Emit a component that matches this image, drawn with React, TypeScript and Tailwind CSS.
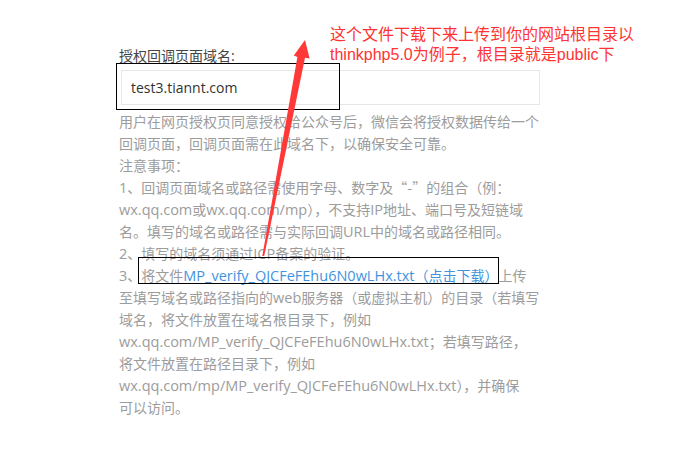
import React from "react";

const font = {
  fontFamily: '"Open Sans", "Noto Sans CJK SC", sans-serif',
};
const red = {
  fontFamily: '"Liberation Sans", "Noto Sans CJK SC", sans-serif',
};
const cjk = {
  fontFamily: '"Noto Sans CJK SC", sans-serif',
};

function rich(s: string): React.ReactNode[] {
  const parts = s.split(/([A-Za-z0-9_./]+)/);
  return parts.map((p, i) =>
    i % 2 === 1 ? (
      <span key={i} className="text-[14.5px]">
        {p}
      </span>
    ) : (
      <span key={i} style={cjk}>
        {p}
      </span>
    )
  );
}

const lines: React.ReactNode[] = [
  rich("用户在网页授权页同意授权给公众号后，微信会将授权数据传给一个"),
  rich("回调页面，回调页面需在此域名下，以确保安全可靠。"),
  rich("注意事项："),
  rich("1、回调页面域名或路径需使用字母、数字及“-”的组合（例："),
  rich("wx.qq.com或wx.qq.com/mp），不支持IP地址、端口号及短链域"),
  rich("名。填写的域名或路径需与实际回调URL中的域名或路径相同。"),
  rich("2、填写的域名须通过ICP备案的验证。"),
  <>
    {rich("3、将文件")}
    <span className="text-[#3f93e0]">{rich("MP_verify_QJCFeFEhu6N0wLHx.txt（点击下载）")}</span>
    {rich("上传")}
  </>,
  rich("至填写域名或路径指向的web服务器（或虚拟主机）的目录（若填写"),
  rich("域名，将文件放置在域名根目录下，例如"),
  rich("wx.qq.com/MP_verify_QJCFeFEhu6N0wLHx.txt；若填写路径，"),
  rich("将文件放置在路径目录下，例如"),
  rich("wx.qq.com/mp/MP_verify_QJCFeFEhu6N0wLHx.txt），并确保"),
  rich("可以访问。"),
];

export default function App() {
  return (
    <div className="relative w-[673px] h-[450px] bg-white overflow-hidden" style={font}>
      <div className="flex flex-col pl-[119px] pt-[45px] w-[545px]">
        <div className="text-[14px] leading-[22px] text-[#444] mb-[3px]">授权回调页面域名:</div>
        <div className="ml-[2px] w-[419px] h-[35px] border border-[#e6e6e6] flex items-center pl-[9px] text-[14px] text-[#333]">
          test3.tiannt.com
        </div>
        <div className="mt-[5px] flex flex-col text-[14px] leading-[22px] text-[#9c9c9c]">
          {lines.map((l, i) => (
            <div key={i} className="whitespace-nowrap h-[22px]">
              {l}
            </div>
          ))}
        </div>
      </div>

      {/* annotation overlays */}
      <div className="absolute left-[116px] top-[63px] w-[224px] h-[47px] border border-black" />
      <div className="absolute left-[138px] top-[257px] w-[361px] h-[27px] border border-black" />

      <div
        className="absolute left-[330px] top-[25px] text-[16px] leading-[20px] text-[#ff3333] whitespace-nowrap"
        style={red}
      >
        <div className="h-[20px]">这个文件下载下来上传到你的网站根目录以</div>
        <div className="h-[20px]">thinkphp5.0为例子，根目录就是public下</div>
      </div>

      <svg className="absolute left-0 top-0" width="673" height="450" viewBox="0 0 673 450">
        <polygon
          points="262.3,256 297.4,57 293.8,55.5 305,40 309.6,58.5 305,57.8 264.2,256"
          fill="#ff3838"
        />
      </svg>
    </div>
  );
}
